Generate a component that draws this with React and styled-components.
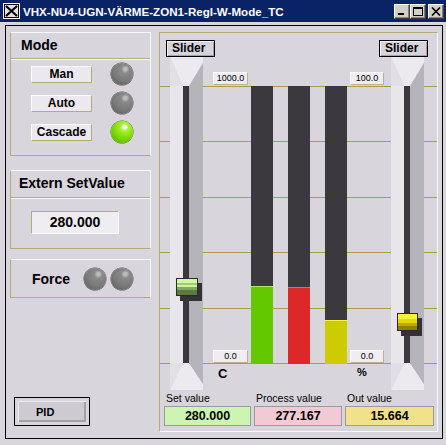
import { createGlobalStyle, styled } from "styled-components";

const GlobalStyle = createGlobalStyle`
  html, body {
    margin: 0;
    padding: 0;
    background: #d8d5dc;
  }
  body {
    font-family: "Liberation Sans", Arial, sans-serif;
    color: #000;
  }
  * {
    box-sizing: border-box;
  }
`;

const OLIVE = "#b4aa7c";
const LIGHT = "#f8f8f8";

// chart geometry: bars run from y=29 to y=306 inside the chart area
const BAR_TOP = 29;
const BAR_HEIGHT = 277;

const DATA = {
  title: "VHX-NU4-UGN-VÄRME-ZON1-Regl-W-Mode_TC",
  modes: [
    { label: "Man", on: false },
    { label: "Auto", on: false },
    { label: "Cascade", on: true },
  ],
  externSetValue: "280.000",
  setValue: 280,
  processValue: 277.167,
  outValue: 15.664,
  scaleMax: 1000,
};

const TitleIcon = () => (
  <svg width="17" height="16" viewBox="0 0 17 16">
    <rect x="0.5" y="0.5" width="16" height="15" fill="#c8c8c8" stroke="#fff" />
    <rect x="1.5" y="1.5" width="14" height="13" fill="#e0e0e0" stroke="#000" />
    <path d="M3 3 L14 13 M14 3 L3 13" stroke="#000" strokeWidth="2.2" />
  </svg>
);

const MinGlyph = () => (
  <svg width="10" height="9" viewBox="0 0 10 9">
    <rect x="1" y="6" width="6" height="2" fill="#000" />
  </svg>
);

const MaxGlyph = () => (
  <svg width="10" height="9" viewBox="0 0 10 9">
    <rect x="0.5" y="0.5" width="9" height="8" fill="none" stroke="#000" />
    <rect x="0" y="0" width="10" height="2" fill="#000" />
  </svg>
);

const CloseGlyph = () => (
  <svg width="10" height="9" viewBox="0 0 10 9">
    <path d="M1 0.5 L9 8.5 M9 0.5 L1 8.5" stroke="#000" strokeWidth="1.6" />
  </svg>
);

const TroughDrawing = () => (
  <svg width="33" height="333" viewBox="0 0 33 333">
    <polygon points="0,0 33,0 33,6 19,29 13,29" fill="#eceaef" />
    <polygon points="0,0 13,29 0,29" fill="#e1dfe5" />
    <polygon points="33,6 33,29 19,29" fill="#b6b4bb" />
    <rect x="0" y="29" width="13" height="277" fill="#e8e6eb" />
    <rect x="13" y="29" width="6" height="277" fill="#3a383c" />
    <rect x="19" y="29" width="14" height="277" fill="#b6b4bb" />
    <polygon points="13,306 19,306 33,327 33,333 0,333" fill="#eceaef" />
    <polygon points="0,306 13,306 0,333" fill="#e1dfe5" />
    <polygon points="19,306 33,306 33,327" fill="#b6b4bb" />
  </svg>
);

function Slider({ fraction, color, width }) {
  const top = BAR_TOP + (1 - fraction) * BAR_HEIGHT - 7;
  return (
    <Trough>
      <TroughDrawing />
      <Thumb $color={color} style={{ top, width }} />
    </Trough>
  );
}

function Bar({ fraction, color }) {
  return (
    <BarTrack>
      <BarFill $color={color} style={{ height: `${fraction * 100}%` }} />
    </BarTrack>
  );
}

const App = () => {
  const setFrac = DATA.setValue / DATA.scaleMax;
  const procFrac = DATA.processValue / DATA.scaleMax;
  const outFrac = DATA.outValue / 100;

  return (
    <>
      <GlobalStyle />
      <Window>
        <TitleBar>
          <TitleIcon />
          <TitleText>{DATA.title}</TitleText>
          <CaptionGroup>
            <CaptionButton>
              <MinGlyph />
            </CaptionButton>
            <CaptionButton>
              <MaxGlyph />
            </CaptionButton>
            <CaptionButton $gap>
              <CloseGlyph />
            </CaptionButton>
          </CaptionGroup>
        </TitleBar>

        <Frame>
          <LeftColumn>
            <ModeBox>
              <BoxHeader $h={26}>Mode</BoxHeader>
              <ModeRows>
                {DATA.modes.map((m) => (
                  <ModeRow key={m.label}>
                    <ModeButton>{m.label}</ModeButton>
                    <Led $on={m.on} />
                  </ModeRow>
                ))}
              </ModeRows>
            </ModeBox>

            <ExternBox>
              <BoxHeader $h={27} $pad={8}>
                Extern SetValue
              </BoxHeader>
              <ExternBody>
                <ValueField>{DATA.externSetValue}</ValueField>
              </ExternBody>
            </ExternBox>

            <ForceBox>
              <ForceLabel>Force</ForceLabel>
              <LedPair>
                <Led />
                <Led />
              </LedPair>
            </ForceBox>

            <PidButton>PID</PidButton>
          </LeftColumn>

          <ChartPanel>
            <TopRow>
              <SliderButton>Slider</SliderButton>
              <SliderButton>Slider</SliderButton>
            </TopRow>

            <Chart>
              <Slider fraction={setFrac} color="green" width={22} />
              <ScaleColumn $ml={10} $w={35}>
                <ScaleLabel $top>1000.0</ScaleLabel>
                <ScaleLabel>0.0</ScaleLabel>
                <Unit $pl={5}>C</Unit>
              </ScaleColumn>
              <BarSlot $ml={3}>
                <Bar fraction={setFrac} color="green" />
              </BarSlot>
              <BarSlot $ml={15}>
                <Bar fraction={procFrac} color="red" />
              </BarSlot>
              <BarSlot $ml={15}>
                <Bar fraction={outFrac} color="yellow" />
              </BarSlot>
              <ScaleColumn $ml={3} $w={34}>
                <ScaleLabel $top>100.0</ScaleLabel>
                <ScaleLabel>0.0</ScaleLabel>
                <Unit $pl={7} $small>%</Unit>
              </ScaleColumn>
              <SliderSlot>
                <Slider fraction={outFrac} color="yellow" width={21} />
              </SliderSlot>
            </Chart>

            <ValueRow>
              <ValueGroup>
                <ValueLabel>Set value</ValueLabel>
                <ValueBox $w={87} $bg="#cdf5b2">
                  280.000
                </ValueBox>
              </ValueGroup>
              <ValueGroup>
                <ValueLabel>Process value</ValueLabel>
                <ValueBox $w={88} $bg="#f2cad3">
                  277.167
                </ValueBox>
              </ValueGroup>
              <ValueGroup>
                <ValueLabel>Out value</ValueLabel>
                <ValueBox $w={89} $bg="#f1e189">
                  15.664
                </ValueBox>
              </ValueGroup>
            </ValueRow>
          </ChartPanel>
        </Frame>
      </Window>
    </>
  );
};

export default App;

const Window = styled.div`
  width: 446px;
  height: 445px;
  display: flex;
  flex-direction: column;
  background: #d8d5dc;
  overflow: hidden;
`;

const TitleBar = styled.div`
  height: 22px;
  flex: none;
  display: flex;
  align-items: center;
  padding: 0 2px 0 3px;
  background: #0a2266;
`;

const TitleText = styled.div`
  flex: 1;
  margin-left: 3px;
  color: #fff;
  font-weight: bold;
  font-size: 11.6px;
  white-space: nowrap;
`;

const CaptionGroup = styled.div`
  display: flex;
  align-items: center;
`;

const CaptionButton = styled.div`
  width: 16px;
  height: 15px;
  margin-left: ${(p) => (p.$gap ? 2 : 0)}px;
  display: flex;
  align-items: center;
  justify-content: center;
  background: #d4d0c8;
  border: 1px solid;
  border-color: #fff #404040 #404040 #fff;
  box-shadow: inset -1px -1px 0 #808080;
`;

const Frame = styled.div`
  flex: 1;
  margin: 3px 3px 6px 5px;
  border: 1px solid #000;
  padding: 6px 4px;
  display: grid;
  grid-template-columns: 141px 279px;
  column-gap: 8px;
`;

const LeftColumn = styled.div`
  display: flex;
  flex-direction: column;
`;

const EtchedBox = styled.div`
  border: 1px solid;
  border-color: ${LIGHT} ${LIGHT} ${OLIVE} ${OLIVE};
`;

const ModeBox = styled(EtchedBox)`
  height: 124px;
`;

const BoxHeader = styled.div`
  height: ${(p) => p.$h}px;
  display: flex;
  align-items: center;
  padding-left: ${(p) => p.$pad ?? 10}px;
  padding-bottom: 2px;
  font-weight: bold;
  font-size: 14px;
  border-bottom: 1px solid ${OLIVE};
  box-shadow: 0 1px 0 ${LIGHT};
`;

const ModeRows = styled.div`
  display: flex;
  flex-direction: column;
  gap: 7px;
  padding: 4px 0 0 20px;
`;

const ModeRow = styled.div`
  display: flex;
  align-items: center;
  height: 22px;
  gap: 19px;
`;

const ModeButton = styled.div`
  width: 61px;
  height: 17px;
  line-height: 15px;
  text-align: center;
  font-weight: bold;
  font-size: 12px;
  background: #ebe9ef;
  border: 1px solid;
  border-color: #fbfbfb ${OLIVE} ${OLIVE} #fbfbfb;
`;

const Led = styled.span`
  width: 22px;
  height: 22px;
  flex: none;
  border-radius: 50%;
  background: ${(p) =>
    p.$on
      ? "radial-gradient(circle at 62% 28%, #f4ffe0 0 1.5px, #a6f030 4px, #78d800 55%, #52a000 100%)"
      : "radial-gradient(circle at 65% 28%, #bcbcbc 0 1.5px, #8a8a8a 4px, #7a7a7a 55%, #555 100%)"};
  box-shadow: 0 0 0 0.5px ${(p) => (p.$on ? "#4a8a00" : "#5a5a5a")};
`;

const ExternBox = styled(EtchedBox)`
  height: 79px;
  margin-top: 14px;
`;

const ExternBody = styled.div`
  padding: 13px 0 0 20px;
`;

const ValueField = styled.div`
  width: 88px;
  height: 23px;
  line-height: 21px;
  text-align: center;
  font-weight: bold;
  font-size: 14px;
  background: #efedf2;
  border: 1px solid;
  border-color: ${OLIVE} #fbfbfb #fbfbfb ${OLIVE};
`;

const ForceBox = styled(EtchedBox)`
  height: 39px;
  margin-top: 10px;
  display: flex;
  align-items: center;
  padding-left: 21px;
  gap: 14px;
`;

const ForceLabel = styled.span`
  font-weight: bold;
  font-size: 14px;
`;

const LedPair = styled.div`
  display: flex;
  gap: 5px;
`;

const PidButton = styled.div`
  margin: auto 0 6px 4px;
  width: 76px;
  height: 29px;
  border: 1px solid #000;
  padding-left: 21px;
  display: flex;
  align-items: center;
  font-weight: bold;
  font-size: 11px;
  background: #cdcbd1;
  box-shadow: inset 0 0 0 3px #d8d5dc, inset 4px 4px 0 #ebe9ed,
    inset -5px -5px 0 #a3a1a7;
`;

const ChartPanel = styled.div`
  border: 1px solid;
  border-color: ${OLIVE} ${LIGHT} ${LIGHT} ${OLIVE};
  padding-top: 7px;
  display: flex;
  flex-direction: column;
`;

const TopRow = styled.div`
  display: flex;
  justify-content: space-between;
  padding: 0 9px 0 6px;
`;

const SliderButton = styled.div`
  width: 49px;
  height: 17px;
  line-height: 15px;
  padding-left: 5px;
  font-weight: bold;
  font-size: 12px;
  border: 1px solid #000;
  background: #d6d4da;
  box-shadow: inset 1px 1px 0 #f2f2f2, inset -1px -1px 0 #a4a2a8;
`;

const gridLine = `linear-gradient(#aa9c4c, #aa9c4c)`;

const Chart = styled.div`
  height: 333px;
  display: flex;
  padding-left: 10px;
  background-image: ${[1, 2, 3, 4, 5, 6].map(() => gridLine).join(", ")};
  background-size: 100% 1px;
  background-repeat: no-repeat;
  background-position: 0 29px, 0 84px, 0 140px, 0 195px, 0 251px, 0 306px;
`;

const Trough = styled.div`
  position: relative;
  width: 33px;
  height: 333px;
  flex: none;

  svg {
    display: block;
  }
`;

const SliderSlot = styled.div`
  margin-left: 7px;
`;

const thumbColors = {
  green:
    "linear-gradient(to bottom, #d6f6a6 0 28%, #9ccf70 28% 40%, #d2f2a2 40% 52%, #80ac5a 52% 68%, #5a7a40 68% 100%)",
  yellow:
    "linear-gradient(to bottom, #f8f040 0 30%, #e6d800 30% 55%, #bcac00 55% 78%, #8e8200 78% 100%)",
};

const Thumb = styled.div`
  position: absolute;
  left: 6px;
  height: 18px;
  border: 1px solid #2a2a2a;
  background: ${(p) => thumbColors[p.$color]};
  box-shadow: 4px 5px 0 #343236;
`;

const ScaleColumn = styled.div`
  width: ${(p) => p.$w}px;
  margin-left: ${(p) => p.$ml}px;
  flex: none;
  display: flex;
  flex-direction: column;
`;

const ScaleLabel = styled.div`
  height: 13px;
  margin-top: ${(p) => (p.$top ? "15px" : "auto")};
  line-height: 11px;
  text-align: center;
  font-size: 9px;
  background: #efedf1;
  border: 1px solid;
  border-color: #fbfbfb #bab28e #bab28e #fbfbfb;
`;

const Unit = styled.div`
  height: 27px;
  padding: 3px 0 0 ${(p) => p.$pl}px;
  font-weight: bold;
  font-size: ${(p) => (p.$small ? 11 : 13)}px;
`;

const BarSlot = styled.div`
  margin-left: ${(p) => p.$ml}px;
  padding-top: ${BAR_TOP}px;
`;

const BarTrack = styled.div`
  width: 22px;
  height: ${BAR_HEIGHT + 1}px;
  display: flex;
  flex-direction: column;
  justify-content: flex-end;
  background: #3b393d;
`;

const fillColors = {
  green: ["#64c800", "#a6e86a"],
  red: ["#dc2828", "#f26262"],
  yellow: ["#cccc00", "#f2f246"],
};

const BarFill = styled.div`
  background: ${(p) => fillColors[p.$color][0]};
  border-top: 1px solid ${(p) => fillColors[p.$color][1]};
`;

const ValueRow = styled.div`
  display: flex;
  gap: 3px;
  padding: 2px 0 0 4px;
`;

const ValueGroup = styled.div`
  display: flex;
  flex-direction: column;
`;

const ValueLabel = styled.div`
  height: 14px;
  line-height: 13px;
  padding-left: 2px;
  font-size: 10.5px;
`;

const ValueBox = styled.div`
  width: ${(p) => p.$w}px;
  height: 20px;
  line-height: 18px;
  text-align: center;
  font-weight: bold;
  font-size: 12.5px;
  background: ${(p) => p.$bg};
  border: 1px solid #9c9aa0;
`;
